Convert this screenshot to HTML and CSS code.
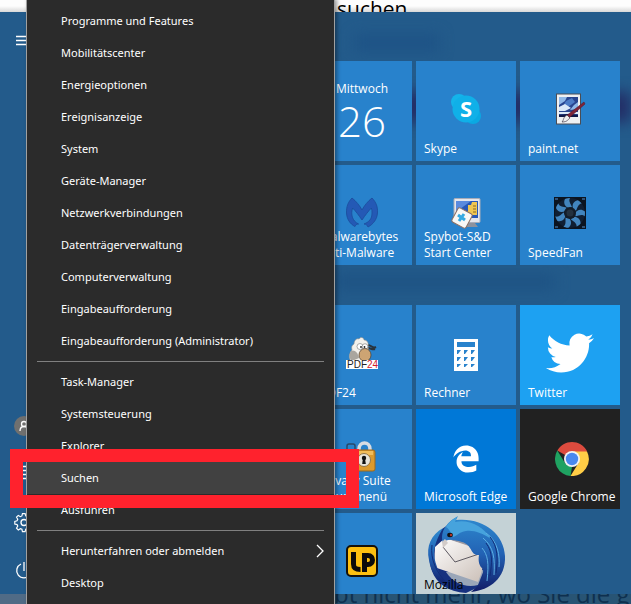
FILE: index.html
```html
<!DOCTYPE html>
<html lang="de">
<head>
<meta charset="utf-8">
<title>Startmenü</title>
<link rel="stylesheet" href="styles.css">
</head>
<body>
<div class="desktop">
  <div class="page-top"><span>suchen.</span></div>

  <main class="start">
    <div class="backdrop" aria-hidden="true">
      <i class="smudge smudge-heading"></i>
      <i class="smudge smudge-band"></i>
      <i class="smudge smudge-line"></i>
    </div>

    <nav class="rail">
      <button class="rail-button" aria-label="Menü"><svg width="24" height="24" viewBox="0 0 24 24"><path d="M4 8.500h16M4 12.500h16M4 16.500h16"/></svg></button>
      <span class="rail-space"></span>
      <button class="rail-button" aria-label="Konto"><svg width="20" height="20" viewBox="0 0 20 20"><circle class="avatar" cx="10" cy="10" r="10"/><circle cx="10" cy="8" r="2.500"/><path d="M6 15c0-6 8-6 8 0"/></svg></button>
      <button class="rail-button" aria-label="Dokumente"><svg width="24" height="24" viewBox="0 0 24 24"><path d="M7 4.500h12M11 8.500h8M11 12.500h8M11 16.500h8"/></svg></button>
      <button class="rail-button" aria-label="Einstellungen"><svg width="24" height="24" viewBox="0 0 24 24"><path d="M10.500 4h3l.6 2.600 1.700.8 2.300-1.400 2 2-1.400 2.300.7 1.700 2.600.6v3l-2.600.6-.7 1.600 1.400 2.300-2 2-2.300-1.400-1.700.7-.6 2.600h-3l-.6-2.600-1.700-.7-2.300 1.400-2-2 1.400-2.300-.8-1.600L2 15.600v-3l2.500-.6.8-1.700L3.900 8l2-2 2.300 1.400 1.700-.8z" transform="translate(1 0) scale(.9)"/><circle cx="12" cy="12.500" r="3"/></svg></button>
      <button class="rail-button" aria-label="Ein/Aus"><svg width="24" height="24" viewBox="0 0 24 24"><path d="M9 6a7.300 7.300 0 1 0 6 0M12 4v9"/></svg></button>
    </nav>

    <div class="app-list"></div>

    <div class="tiles">
      <section class="group">
        <a class="tile tile-date" href="#"><span>Mittwoch</span><span class="day">26</span></a>
        <a class="tile" href="#">
          <svg class="icon" width="32" height="32" viewBox="0 0 32 32"><circle cx="9" cy="9" r="8" fill="#14b4ea"/><circle cx="23" cy="23" r="8" fill="#0aa9e2"/><circle cx="16" cy="16" r="13.500" fill="#10b0e8"/><text class="skype-s" x="16" y="24" text-anchor="middle">S</text></svg>
          <span class="label">Skype</span></a>
        <a class="tile" href="#">
          <svg class="icon" width="32" height="32" viewBox="0 0 32 32"><rect x="2.500" y="1" width="24" height="30" fill="#eef0f2" stroke="#4a4d55"/><path fill="#29458f" d="M5 4h19v20H5z"/><path fill="#8fb8e8" d="M5 4h8l-2 4-6 4zM20 12l4-3v7l-8 1z"/><path fill="#4d7cc6" d="m12 8 6-3 3 4-7 5-5-1z"/><path fill="#dbe9f8" d="m5 14 6-3 6 4-6 3H5zM5 19h19v2H5z"/><path fill="#101846" d="m5 22 9-1 10 1v2H5z"/><path fill="#7f2438" stroke="#571522" stroke-width=".5" d="m30 9 1 2-16 14-3-2z"/><path fill="#eee" stroke="#2b2030" stroke-width=".6" d="m13 22 3 3c-2 1-2 4-8 4 2-2 1-5 5-7z"/></svg>
          <span class="label">paint.net</span></a>
        <a class="tile" href="#">
          <svg class="icon" width="32" height="32" viewBox="0 0 32 32"><path fill="#2459b5" stroke="#1c4b9a" stroke-width=".8" d="M6 1c4 3 8 8 10 12C18 9 22 4 26 1c4 4 6 9 5.500 15-.4 6-4 11-9.500 14-1-2-2-3-4-3 5-2 8-5 8-11 0-2 0-3-.6-5-3 3-6 7-9.400 12-3.400-5-6.400-9-9.400-12-2 6-.6 13 6 16-2 0-3 1-3.600 2.500C4 27 .8 22 .5 16 .2 10 2 5 6 1z"/></svg>
          <span class="label">Malwarebytes<br>Anti-Malware</span></a>
        <a class="tile" href="#">
          <svg class="icon" width="32" height="32" viewBox="0 0 32 32"><path fill="#8c929e" d="M14 26h11l3 4H11z"/><rect x="4" y="1.500" width="26" height="24" rx="1" fill="#e4e6ec" stroke="#a8acb8"/><path fill="#2858b8" d="M6 4h22v17H6z"/><path fill="#5a8ade" d="M6 4h15L6 15z"/><path fill="#eec652" d="M18 8h3l1-3h5v13H18z"/><path stroke="#8d681f" d="M23 9h3M23 12h3M23 15h3"/><rect x="4" y="13" width="16" height="16" rx="2" fill="#f8f8f6" stroke="#8b6f62" transform="rotate(28 12 21)"/><path stroke="#35a9e1" stroke-width="3" d="m8 18 7 5m-1-6-5 7"/></svg>
          <span class="label">Spybot-S&amp;D<br>Start Center</span></a>
        <a class="tile" href="#">
          <svg class="icon" width="32" height="32" viewBox="0 0 32 32"><path fill="#0b1420" d="M0 0h32v32H0z"/><circle cx="16" cy="16" r="15" fill="#101f33"/><g fill="#4285be"><path id="blade" d="M15 11c-4-1-6-5-4-9 2-1 4-1 5-1-2 3 1 6 2 9z"/><use href="#blade" transform="rotate(51 16 16)"/><use href="#blade" transform="rotate(103 16 16)"/><use href="#blade" transform="rotate(154 16 16)"/><use href="#blade" transform="rotate(206 16 16)"/><use href="#blade" transform="rotate(257 16 16)"/><use href="#blade" transform="rotate(309 16 16)"/></g><circle cx="16" cy="16" r="6" fill="#131c28"/><circle cx="16" cy="16" r="3.500" fill="#24313f"/><path fill="#2e5277" d="M1 1h3v2H1zM28 1h3v2h-3zM1 29h3v2H1zM28 29h3v2h-3z"/></svg>
          <span class="label">SpeedFan</span></a>
      </section>

      <section class="group">
        <a class="tile" href="#">
          <svg class="icon" width="32" height="32" viewBox="0 0 32 32"><path stroke="#29333c" stroke-width="2" d="M21 8c4-1 5 4 9 2M22 11c3 0 4 2 7 1"/><path fill="#f3f1ec" stroke="#8f8b85" stroke-width=".6" d="M8 7c0-4 3-6 5-5 2-3 5-1 5 1 3 0 5 3 4 6l1 9-9 6-8 1c-4-3-3-9 0-12-1-3 0-5 2-6z"/><path fill="#aaa69f" d="M5 14c3-2 7 1 8 7l-7 3c-3-2-3-7-1-10z"/><circle cx="14" cy="9.500" r="3" fill="#fff" stroke="#777" stroke-width=".6"/><circle cx="19" cy="9.500" r="2.800" fill="#fff" stroke="#777" stroke-width=".6"/><circle cx="15" cy="10" r=".9" fill="#222"/><circle cx="18.500" cy="10" r=".9" fill="#222"/><ellipse cx="19" cy="18" rx="6" ry="6.500" fill="#cda473" stroke="#4a3a2a" stroke-width=".7"/><path fill="#fff" d="M0 23h32v9H0z"/><text class="pdf" x="1" y="31">PDF<tspan fill="#d2202c">24</tspan></text></svg>
          <span class="label">PDF24</span></a>
        <a class="tile" href="#">
          <svg class="icon icon-low" width="24" height="32" viewBox="0 0 24 32"><path fill="#fff" d="M0 0h24v32H0z"/><path fill="#2882cc" d="M3 3h18v5H3zM3 11h4L4 15H3zM10 11h4l-3 4h-1zM17 11h4l-3 4h-1zM3 18h4l-3 4H3zM10 18h4l-3 4h-1zM17 18h4l-3 4h-1zM3 25h4l-3 3H3zM10 25h4l-3 3h-1zM17 25h4l-3 3h-1z"/></svg>
          <span class="label">Rechner</span></a>
        <a class="tile tile-twitter" href="#">
          <svg class="icon" width="48" height="48" viewBox="0 0 24 24"><path fill="#fff" d="M23.953 4.570a10 10 0 01-2.825.775 4.958 4.958 0 002.163-2.723c-.951.555-2.005.959-3.127 1.184a4.920 4.920 0 00-8.384 4.482C7.690 8.095 4.067 6.130 1.640 3.162a4.822 4.822 0 00-.666 2.475c0 1.710.87 3.213 2.188 4.096a4.904 4.904 0 01-2.228-.616v.06a4.923 4.923 0 003.946 4.827 4.996 4.996 0 01-2.212.085 4.936 4.936 0 004.604 3.417 9.867 9.867 0 01-6.102 2.105c-.39 0-.779-.023-1.170-.067a13.995 13.995 0 007.557 2.209c9.053 0 13.998-7.496 13.998-13.985 0-.21 0-.42-.015-.63A9.935 9.935 0 0024 4.590z"/></svg>
          <span class="label">Twitter</span></a>
        <a class="tile" href="#">
          <svg class="icon" width="32" height="32" viewBox="0 0 32 32"><rect x="1" y="3" width="8" height="12" rx="2" stroke="#28496b" stroke-width="1.500"/><path stroke="#d8dce2" stroke-width="3.500" d="M13 12V8c0-8 11-8 11 0v4"/><rect x="8" y="9" width="21" height="21" rx="2" fill="#dc9a2c" stroke="#9b681d"/><path fill="#f2bd5a" d="M10 10h17v4H10z"/><circle cx="18" cy="19" r="6.500" fill="#e8e4da" stroke="#917548"/><circle cx="18" cy="17" r="2.200" fill="#111"/><path fill="#111" d="M17 17h2l.8 6h-3.600z"/></svg>
          <span class="label">Privacy Suite<br>Hauptmenü</span></a>
        <a class="tile tile-edge" href="#">
          <svg class="icon icon-low" width="28" height="28" viewBox="0 0 512 512"><path fill="#fff" d="M486.286 243.671c0-44.032-7.754-84.465-28.801-122.405C416.498 47.879 343.912 8.001 258.893 8.001 118.962 7.724 40.617 113.214 26.056 227.679c42.429-61.312 117.073-121.376 220.375-124.966 0 0 109.666 0 99.419 104.957H169.997c6.369-37.386 18.554-58.986 34.339-78.926-75.048 34.900-121.851 96.104-120.742 188.315.83 71.448 50.124 144.836 120.743 171.976 83.357 31.847 192.776 7.200 240.132-21.324V363.307c-80.864 56.494-270.871 60.925-272.255-67.572h314.073z"/></svg>
          <span class="label">Microsoft Edge</span></a>
        <a class="tile tile-chrome" href="#">
          <svg class="icon icon-low" width="34" height="34" viewBox="0 0 34 34"><path fill="#dc4b3e" d="M17 17 2.300 8.500A17 17 0 0 1 31.700 8.500L31.700 10H17z"/><path fill="#1fa261" d="M2.300 8.500 10 21l7 4-1.500 9A17 17 0 0 1 2.300 8.500z"/><path fill="#ffcd46" d="M17 9.500h15A17 17 0 0 1 15.500 34l8-13z"/><circle cx="17" cy="17" r="8" fill="#f3f3f3"/><circle cx="17" cy="17" r="6.200" fill="#4a88ee"/></svg>
          <span class="label">Google Chrome</span></a>
        <a class="tile" href="#" aria-label="LP">
          <svg class="icon" width="32" height="32" viewBox="0 0 32 32"><rect x="1" y="1" width="30" height="30" rx="4" fill="#fdc010" stroke="#15110a" stroke-width="2"/><path stroke="#0c0b0a" stroke-width="5" d="M7.500 7v12c0 4 2 5.500 7 5.500"/><path stroke="#0c0b0a" stroke-width="5" d="M18.500 27V10.500H22c6 0 6 9 0 9h-4"/></svg></a>
        <a class="tile tile-mozilla" href="#">
          <svg class="cover" width="80" height="80" viewBox="0 0 80 80">
            <defs><linearGradient id="wing" x1="0" y1="0" x2="0" y2="1"><stop offset="0" stop-color="#2f8bd0"/><stop offset=".5" stop-color="#2262b4"/><stop offset="1" stop-color="#111b66"/></linearGradient>
            <linearGradient id="mail" x1="0" y1="0" x2="1" y2="1"><stop offset="0" stop-color="#fff"/><stop offset="1" stop-color="#c9bdb5"/></linearGradient></defs>
            <path fill="#16317f" d="M22 12h30l12 20-7 40-17 8c-18-1-30-10-34-22C-1 38 6 21 22 12z"/>
            <path fill="#9aa6b8" d="m20 59 38-2-6 15c-12 3-24-1-32-13z"/>
            <path fill="url(#mail)" d="m9 34 10-9 42 12-6 24-3 8-44-15z"/>
            <path fill="#9c98a0" d="m22 26 22-2 14 9-6 3-24-8z"/>
            <path stroke="#5d5961" stroke-width="1" d="m17 34 12 15 27-9"/>
            <path fill="url(#wing)" d="M17 15C5 22 0 33 3 47c2 13 9 22 19 26-7-9-13-20-14-32 0-9 4-17 9-26z"/>
            <path fill="url(#wing)" d="M17 30c-2-5-1-12 3-17 3-4 4-5 12-10l-2 4c26-3 48 13 49 36 1 22-15 34-34 36 10-8 13-14 12-23-4-3-5-8-4-14-9 1-6-10-17-13-8-2-15-4-19 1z"/>
            <path fill="#46a3dd" d="M20 14c3-5 7-8 11-10l-2 5c14-3 28 4 36 17-9-6-17-9-25-8-7 1-9 5-13 6-3-6-4-8-7-10z"/>
            <path stroke="#5dafe3" stroke-width="1" d="M60 20c12 8 14 23 13 34M57 25c11 9 12 21 11 37M56 35c6 7 7 15 5 33"/>
            <path stroke="#112c78" stroke-width="1" d="M64 24c8 9 8 23 6 36M60 30c7 9 6 20 4 33M6 32c-2 15 5 28 14 37"/>
            <ellipse cx="24" cy="22" rx="2.800" ry="2.200" fill="#111"/><circle cx="25" cy="22" r="1.200" fill="#b23425"/>
            <path fill="#d2cbc8" d="m16 29 3-3 3 4-5 5z"/>
          </svg>
          <span class="label label-tall">Mozilla</span></a>
      </section>
    </div>
  </main>

  <footer class="taskbar"><span class="taskbar-text">bt nicht mehr, wo Sie die g</span></footer>

  <ul class="menu">
    <li><button>Programme und Features</button></li>
    <li><button>Mobilitätscenter</button></li>
    <li><button>Energieoptionen</button></li>
    <li><button>Ereignisanzeige</button></li>
    <li><button>System</button></li>
    <li><button>Geräte-Manager</button></li>
    <li><button>Netzwerkverbindungen</button></li>
    <li><button>Datenträgerverwaltung</button></li>
    <li><button>Computerverwaltung</button></li>
    <li><button>Eingabeaufforderung</button></li>
    <li><button>Eingabeaufforderung (Administrator)</button></li>
    <li class="separator"></li>
    <li><button>Task-Manager</button></li>
    <li><button>Systemsteuerung</button></li>
    <li><button>Explorer</button></li>
    <li class="active"><button>Suchen</button></li>
    <li><button>Ausführen</button></li>
    <li class="separator"></li>
    <li><button>Herunterfahren oder abmelden<svg class="chevron" width="8" height="14" viewBox="0 0 8 14"><path d="m1 1 6 6-6 6"/></svg></button></li>
    <li><button>Desktop</button></li>
  </ul>
</div>
</body>
</html>
```
FILE: styles.css
```css
* { box-sizing: border-box; }

body {
  margin: 0;
  font-family: "Open Sans", "Noto Sans", sans-serif;
  font-size: 12px;
  line-height: 16px;
  color: #fff;
}

button {
  border: 0;
  padding: 0;
  background: none;
  color: inherit;
  font: inherit;
  text-align: left;
}

svg { fill: none; }

.desktop {
  position: relative;
  display: flex;
  flex-direction: column;
  height: 100vh;
  overflow: hidden;
}

/* Document behind the start menu */
.page-top {
  flex: none;
  height: 12px;
  padding-left: 337px;
  overflow: hidden;
  background: linear-gradient(#fdfdfd 50%, #d8d8d8);
  color: #000;
  font-size: 21px;
  line-height: 18px;
}

.start {
  position: relative;
  display: flex;
  flex: 1;
  min-height: 0;
  overflow: hidden;
  background: #235b8b;
}

.backdrop { position: absolute; inset: 0; }
.smudge { position: absolute; filter: blur(7px); }
.smudge-heading { left: 355px; top: 22px; width: 84px; height: 18px; background: #1e5386; }
.smudge-band { left: 335px; right: 0; top: 80px; height: 30px; background: #232f67; }
.smudge-line { left: 335px; top: 262px; width: 220px; height: 16px; background: #1e5384; }

.rail {
  position: relative;
  display: flex;
  flex-direction: column;
  flex: none;
  width: 48px;
  padding-top: 4px;
}

.rail-button {
  display: grid;
  place-items: center;
  height: 48px;
}

.rail-button svg { stroke: #fff; stroke-width: 1.3; }
.rail-button .avatar { fill: #70706f; stroke: none; }
.rail-space { flex: 1; }
.app-list { flex: none; width: 264px; }

.tiles {
  position: relative;
  display: flex;
  flex-direction: column;
  gap: 40px;
  padding-top: 49px;
}

.group {
  display: grid;
  grid-template-columns: repeat(3, 100px);
  grid-auto-rows: 100px;
  gap: 4px;
}

/* Icon and label share one cell, so the icon stays centred */
.tile {
  display: grid;
  grid-template: 1fr / 1fr;
  padding: 0 8px 4px;
  background: #2882cc;
  color: #fff;
  text-decoration: none;
  white-space: nowrap;
}

.icon { grid-area: 1 / 1; place-self: center; }
.icon-low { margin-top: 4px; }
.label { grid-area: 1 / 1; place-self: end start; position: relative; }
.label-tall { min-height: 32px; }

.tile-date {
  grid-template: auto auto / 1fr;
  align-content: start;
  justify-items: center;
  padding-top: 20px;
}

.day {
  font-size: 42px;
  font-weight: 300;
  line-height: 48px;
}

.tile-twitter { background: #1da1f2; }
.tile-edge { background: #0078d7; }
.tile-chrome { background: #212121; }
.tile-mozilla { background: #c4d2d6; color: #000; }
.cover { grid-area: 1 / 1; place-self: start center; }

.skype-s { fill: #fff; font: bold 22px "Open Sans", sans-serif; }
.pdf { fill: #222; font: 10px "Liberation Sans", sans-serif; }

.taskbar {
  flex: none;
  height: 10px;
  padding-left: 334px;
  overflow: hidden;
  background: linear-gradient(90deg, #506b86 30px, #285474 330px);
}

.taskbar-text {
  display: block;
  margin-top: -12px;
  color: #0e304f;
  font-size: 24px;
  line-height: 24px;
  white-space: nowrap;
}

/* Context menu */
.menu {
  position: absolute;
  left: 26px;
  top: -1px;
  width: 309px;
  margin: 0;
  padding: 5px 0 8px;
  border: 1px solid #a0a0a0;
  background: #2b2b2b;
  box-shadow: 2px 0 4px #0006;
  font-family: "Noto Sans", "Open Sans", sans-serif;
  font-size: 11px;
  list-style: none;
}

.menu button {
  display: flex;
  align-items: center;
  justify-content: space-between;
  width: 100%;
  height: 32px;
  padding: 0 10px 0 34px;
}

.separator {
  height: 9px;
  margin: 0 10px;
  padding-top: 4px;
}

.separator::before {
  display: block;
  height: 1px;
  background: #808080;
  content: "";
}

.chevron { stroke: #fff; stroke-width: 1.3; }

.active { position: relative; z-index: 1; }
.active button { background: #414141; }

.active::after {
  position: absolute;
  inset: -13px -25px -14px -17px;
  border: 13px solid #ff222d;
  content: "";
}
```
